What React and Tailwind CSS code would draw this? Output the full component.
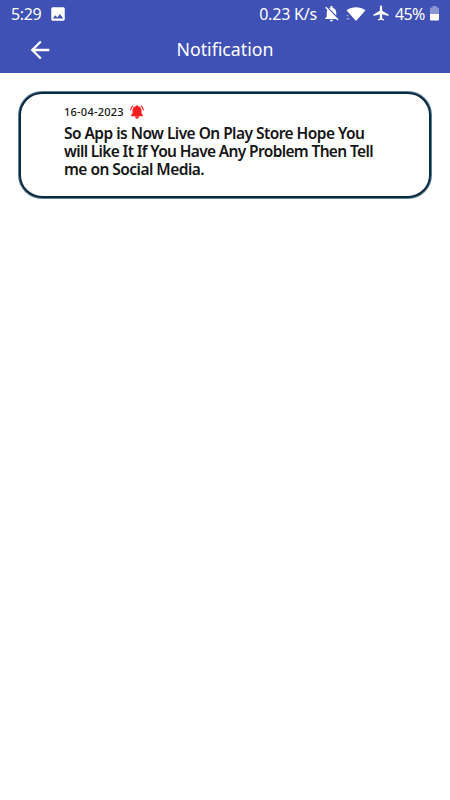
import React from "react";
import {
  MdAirplanemodeActive,
  MdArrowBack,
  MdImage,
  MdNotificationsOff,
} from "react-icons/md";

const notifications = [
  {
    id: 1,
    date: "16-04-2023",
    lines: [
      { text: "So App is Now Live On Play Store Hope You", spacing: "tracking-[-0.54px]" },
      { text: "will Like It If You Have Any Problem Then Tell", spacing: "tracking-[-0.65px]" },
      { text: "me on Social Media.", spacing: "tracking-[-0.53px]" },
    ],
  },
];

function WifiIcon() {
  return (
    <svg viewBox="0 0 20 16" className="h-4 w-5" fill="currentColor">
      <path d="M0.5 4.3C6 0.2 14 0.2 19.5 4.3L10 15z" />
      <path d="M0.5 9h2.2v1.2h-2.2zM0.5 12h3.2v1.4h-3.2z" opacity="0.4" />
    </svg>
  );
}

function BatteryIcon() {
  return (
    <svg viewBox="0 0 9 15" className="h-[15px] w-[9px]" fill="currentColor">
      <path d="M2.5 0h4v1.5H8a1 1 0 0 1 1 1V8H0V2.5a1 1 0 0 1 1-1h1.5z" opacity="0.4" />
      <path d="M0 8h9v5.5a1 1 0 0 1-1 1H1a1 1 0 0 1-1-1z" />
    </svg>
  );
}

function BellIcon() {
  return (
    <svg viewBox="0 0 14 14" className="ml-1.5 h-[14px] w-[14px] text-[#f51d20]">
      <path
        d="M7 0.2c.7 0 1 .4 1 1 2.4.4 3.5 2 3.5 4.2v2.9l1.3 1.7v1.2H1.2V10l1.3-1.7V5.4C2.5 3.2 3.6 1.6 6 1.2c0-.6.3-1 1-1zM5 11.6h4c0 2.8-4 2.8-4 0z"
        fill="currentColor"
      />
      <path
        d="M3.1 0.8C1.6 1.8.7 3.3.6 5.2M10.9 0.8c1.5 1 2.4 2.5 2.5 4.4"
        fill="none"
        stroke="currentColor"
        strokeWidth="1.2"
      />
    </svg>
  );
}

function StatusBar() {
  return (
    <div className="flex h-7 items-center pl-[11px] pr-[11px] font-['Noto_Sans',sans-serif] text-base">
      <span className="w-[30px] tracking-[-0.4px]">5:29</span>
      <MdImage className="-mt-px ml-2 h-[18px] w-[18px]" />
      <span className="ml-auto tracking-[-0.2px]">0.23 K/s</span>
      <MdNotificationsOff className="-mt-0.5 ml-[5px] h-[19px] w-[19px]" />
      <span className="ml-[5px]">
        <WifiIcon />
      </span>
      <MdAirplanemodeActive className="-mt-0.5 ml-1.5 h-[18px] w-[18px]" />
      <span className="ml-[5px] w-[30px] tracking-[-0.7px]">45%</span>
      <span className="-mt-0.5 ml-[5px]">
        <BatteryIcon />
      </span>
    </div>
  );
}

function NotificationCard({ notification }) {
  return (
    <div className="rounded-[24px] bg-[#5f8095] p-px">
      <div className="h-[106px] rounded-[23px] border-2 border-[#0d2a40] bg-white pl-[43px] pt-2 font-['Noto_Sans',sans-serif] text-[#151515]">
        <div className="flex h-5 items-center">
          <span className="text-[11px] font-medium tracking-[0.25px]">{notification.date}</span>
          <BellIcon />
        </div>
        <div className="mt-0.5 text-[15.5px] font-semibold leading-[18px]">
          {notification.lines.map((line) => (
            <p key={line.text} className={`whitespace-nowrap ${line.spacing}`}>
              {line.text}
            </p>
          ))}
        </div>
      </div>
    </div>
  );
}

function App() {
  return (
    <div className="h-[800px] w-[450px] overflow-hidden bg-white">
      <header className="h-[73px] bg-[#3f51b5] text-white">
        <StatusBar />
        <div className="grid h-[43px] grid-cols-[80px_1fr_80px] items-center">
          <MdArrowBack className="ml-[26px] h-7 w-7" />
          <h1 className="text-center font-['Noto_Sans',sans-serif] text-[17.75px]">
            Notification
          </h1>
        </div>
      </header>
      <main className="pl-[18px] pr-[18px] pt-[18px]">
        {notifications.map((notification) => (
          <NotificationCard key={notification.id} notification={notification} />
        ))}
      </main>
    </div>
  );
}

export default App;
